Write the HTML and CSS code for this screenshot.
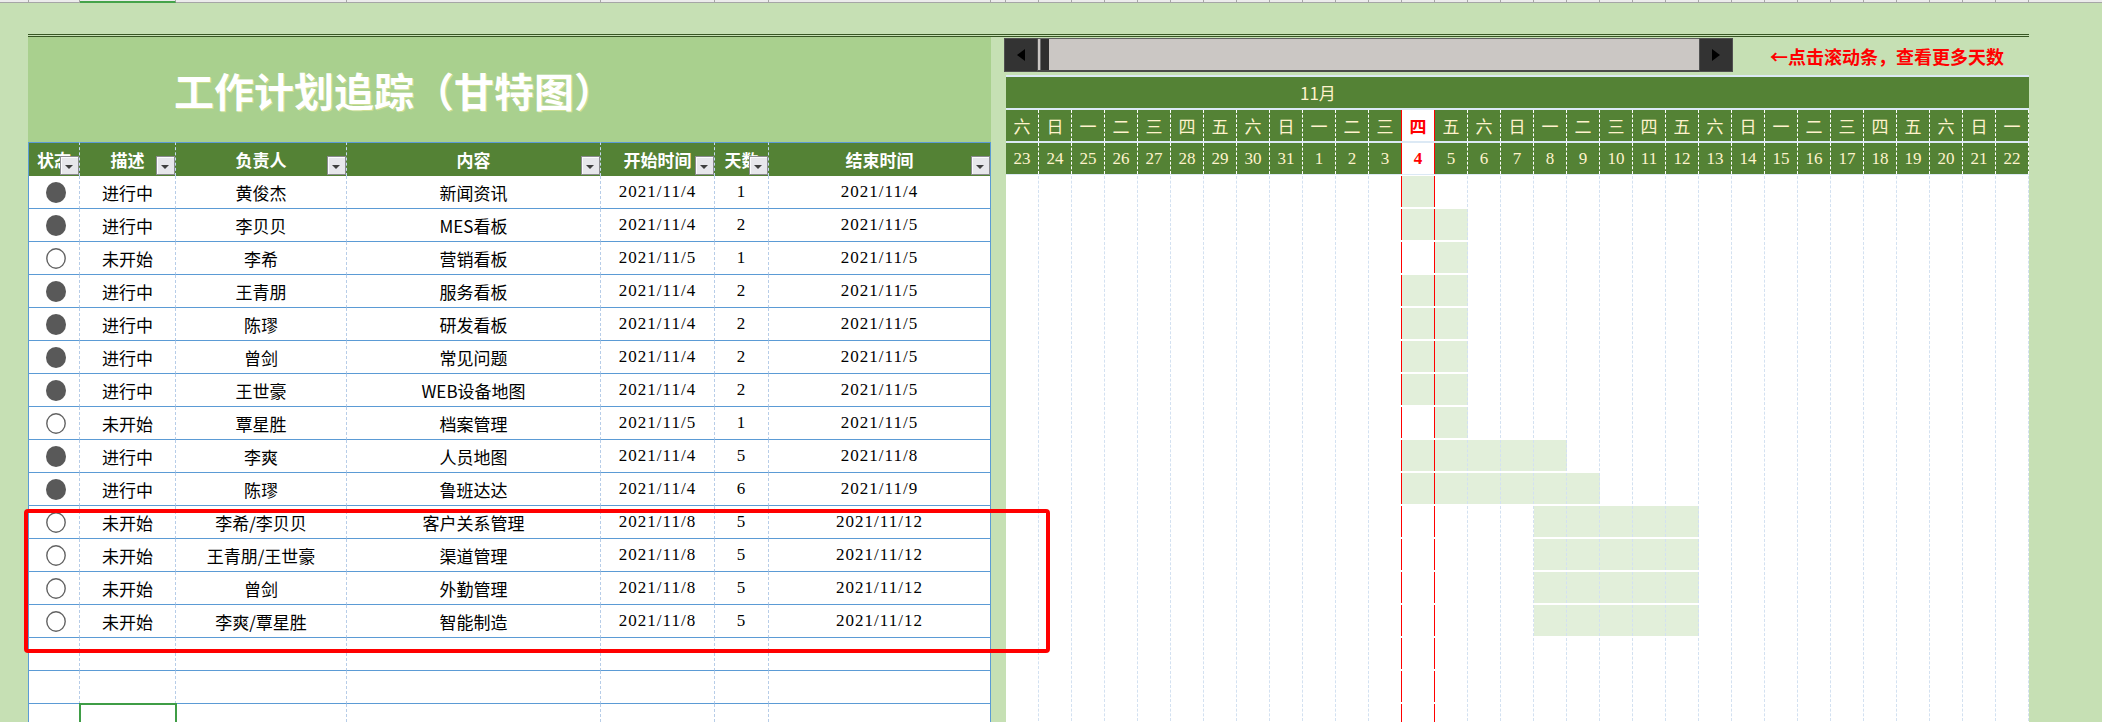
FILE: index.html
```html
<!DOCTYPE html>
<html lang="zh-CN">
<head>
<meta charset="utf-8">
<title>工作计划追踪（甘特图）</title>
<link rel="stylesheet" href="styles.css">
</head>
<body>
<div class="colhdr">
  <span class="c0"></span><span class="c1"></span><span class="c2"></span><span class="c3"></span><span class="c4"></span><span class="c5"></span><span class="c6"></span><span class="c7"></span><span class="cg"></span>
  <span class="cd"></span><span class="cd"></span><span class="cd"></span><span class="cd"></span><span class="cd"></span><span class="cd"></span><span class="cd"></span><span class="cd"></span><span class="cd"></span><span class="cd"></span><span class="cd"></span><span class="cd"></span><span class="cd"></span><span class="cd"></span><span class="cd"></span><span class="cd"></span><span class="cd"></span><span class="cd"></span><span class="cd"></span><span class="cd"></span><span class="cd"></span><span class="cd"></span><span class="cd"></span><span class="cd"></span><span class="cd"></span><span class="cd"></span><span class="cd"></span><span class="cd"></span><span class="cd"></span><span class="cd"></span><span class="cd"></span>
  <span class="cr"></span>
</div>
<div class="dline"></div>
<div class="main">
  <section class="left">
    <div class="title">工作计划追踪（甘特图）</div>
    <div class="trow thead">
      <div>状态<b class="fb"></b></div>
      <div>描述<b class="fb"></b></div>
      <div>负责人<b class="fb"></b></div>
      <div>内容<b class="fb"></b></div>
      <div>开始时间<b class="fb"></b></div>
      <div>天数<b class="fb"></b></div>
      <div>结束时间<b class="fb"></b></div>
    </div>
    <div class="trow"><div><svg class="dot" viewBox="0 0 20 21"><ellipse cx="10" cy="10.5" rx="10" ry="10.5"/></svg></div><div>进行中</div><div>黄俊杰</div><div>新闻资讯</div><div class="n">2021/11/4</div><div class="n">1</div><div class="n">2021/11/4</div></div>
    <div class="trow"><div><svg class="dot" viewBox="0 0 20 21"><ellipse cx="10" cy="10.5" rx="10" ry="10.5"/></svg></div><div>进行中</div><div>李贝贝</div><div>MES看板</div><div class="n">2021/11/4</div><div class="n">2</div><div class="n">2021/11/5</div></div>
    <div class="trow"><div><svg class="ring" viewBox="0 0 20 21"><ellipse cx="10" cy="10.5" rx="9.2" ry="9.7"/></svg></div><div>未开始</div><div>李希</div><div>营销看板</div><div class="n">2021/11/5</div><div class="n">1</div><div class="n">2021/11/5</div></div>
    <div class="trow"><div><svg class="dot" viewBox="0 0 20 21"><ellipse cx="10" cy="10.5" rx="10" ry="10.5"/></svg></div><div>进行中</div><div>王青朋</div><div>服务看板</div><div class="n">2021/11/4</div><div class="n">2</div><div class="n">2021/11/5</div></div>
    <div class="trow"><div><svg class="dot" viewBox="0 0 20 21"><ellipse cx="10" cy="10.5" rx="10" ry="10.5"/></svg></div><div>进行中</div><div>陈璆</div><div>研发看板</div><div class="n">2021/11/4</div><div class="n">2</div><div class="n">2021/11/5</div></div>
    <div class="trow"><div><svg class="dot" viewBox="0 0 20 21"><ellipse cx="10" cy="10.5" rx="10" ry="10.5"/></svg></div><div>进行中</div><div>曾剑</div><div>常见问题</div><div class="n">2021/11/4</div><div class="n">2</div><div class="n">2021/11/5</div></div>
    <div class="trow"><div><svg class="dot" viewBox="0 0 20 21"><ellipse cx="10" cy="10.5" rx="10" ry="10.5"/></svg></div><div>进行中</div><div>王世豪</div><div>WEB设备地图</div><div class="n">2021/11/4</div><div class="n">2</div><div class="n">2021/11/5</div></div>
    <div class="trow"><div><svg class="ring" viewBox="0 0 20 21"><ellipse cx="10" cy="10.5" rx="9.2" ry="9.7"/></svg></div><div>未开始</div><div>覃星胜</div><div>档案管理</div><div class="n">2021/11/5</div><div class="n">1</div><div class="n">2021/11/5</div></div>
    <div class="trow"><div><svg class="dot" viewBox="0 0 20 21"><ellipse cx="10" cy="10.5" rx="10" ry="10.5"/></svg></div><div>进行中</div><div>李爽</div><div>人员地图</div><div class="n">2021/11/4</div><div class="n">5</div><div class="n">2021/11/8</div></div>
    <div class="trow"><div><svg class="dot" viewBox="0 0 20 21"><ellipse cx="10" cy="10.5" rx="10" ry="10.5"/></svg></div><div>进行中</div><div>陈璆</div><div>鲁班达达</div><div class="n">2021/11/4</div><div class="n">6</div><div class="n">2021/11/9</div></div>
    <div class="trow"><div><svg class="ring" viewBox="0 0 20 21"><ellipse cx="10" cy="10.5" rx="9.2" ry="9.7"/></svg></div><div>未开始</div><div>李希/李贝贝</div><div>客户关系管理</div><div class="n">2021/11/8</div><div class="n">5</div><div class="n">2021/11/12</div></div>
    <div class="trow"><div><svg class="ring" viewBox="0 0 20 21"><ellipse cx="10" cy="10.5" rx="9.2" ry="9.7"/></svg></div><div>未开始</div><div>王青朋/王世豪</div><div>渠道管理</div><div class="n">2021/11/8</div><div class="n">5</div><div class="n">2021/11/12</div></div>
    <div class="trow"><div><svg class="ring" viewBox="0 0 20 21"><ellipse cx="10" cy="10.5" rx="9.2" ry="9.7"/></svg></div><div>未开始</div><div>曾剑</div><div>外勤管理</div><div class="n">2021/11/8</div><div class="n">5</div><div class="n">2021/11/12</div></div>
    <div class="trow"><div><svg class="ring" viewBox="0 0 20 21"><ellipse cx="10" cy="10.5" rx="9.2" ry="9.7"/></svg></div><div>未开始</div><div>李爽/覃星胜</div><div>智能制造</div><div class="n">2021/11/8</div><div class="n">5</div><div class="n">2021/11/12</div></div>
    <div class="trow"><div></div><div></div><div></div><div></div><div></div><div></div><div></div></div>
    <div class="trow"><div></div><div></div><div></div><div></div><div></div><div></div><div></div></div>
    <div class="trow"><div></div><div class="sel"></div><div></div><div></div><div></div><div></div><div></div></div>
  </section>
  <div class="gut"></div>
  <section class="right">
    <div class="sbar">
      <div class="scroll">
        <div class="sbtn"><svg viewBox="0 0 8 12"><path d="M8 0V12L0 6Z"/></svg></div>
        <div class="strack"><div class="thumb"></div></div>
        <div class="sbtn"><svg viewBox="0 0 8 12"><path d="M0 0V12L8 6Z"/></svg></div>
      </div>
      <div class="hint">←点击滚动条，查看更多天数</div>
    </div>
    <div class="mrow">11月</div>
    <div class="hrow wk">
      <span>六</span><span>日</span><span>一</span><span>二</span><span>三</span><span>四</span><span>五</span><span>六</span><span>日</span><span>一</span><span>二</span><span class="r">三</span><span class="r t">四</span><span>五</span><span>六</span><span>日</span><span>一</span><span>二</span><span>三</span><span>四</span><span>五</span><span>六</span><span>日</span><span>一</span><span>二</span><span>三</span><span>四</span><span>五</span><span>六</span><span>日</span><span>一</span>
    </div>
    <div class="hrow dy">
      <span>23</span><span>24</span><span>25</span><span>26</span><span>27</span><span>28</span><span>29</span><span>30</span><span>31</span><span>1</span><span>2</span><span class="r">3</span><span class="r t">4</span><span>5</span><span>6</span><span>7</span><span>8</span><span>9</span><span>10</span><span>11</span><span>12</span><span>13</span><span>14</span><span>15</span><span>16</span><span>17</span><span>18</span><span>19</span><span>20</span><span>21</span><span>22</span>
    </div>
    <div class="gbody">
      <div class="grow"><i></i><i></i><i></i><i></i><i></i><i></i><i></i><i></i><i></i><i></i><i></i><i class="r"></i><i class="r f"></i><i></i><i></i><i></i><i></i><i></i><i></i><i></i><i></i><i></i><i></i><i></i><i></i><i></i><i></i><i></i><i></i><i></i><i></i></div>
      <div class="grow"><i></i><i></i><i></i><i></i><i></i><i></i><i></i><i></i><i></i><i></i><i></i><i class="r"></i><i class="r f"></i><i class="f"></i><i></i><i></i><i></i><i></i><i></i><i></i><i></i><i></i><i></i><i></i><i></i><i></i><i></i><i></i><i></i><i></i><i></i></div>
      <div class="grow"><i></i><i></i><i></i><i></i><i></i><i></i><i></i><i></i><i></i><i></i><i></i><i class="r"></i><i class="r"></i><i class="f"></i><i></i><i></i><i></i><i></i><i></i><i></i><i></i><i></i><i></i><i></i><i></i><i></i><i></i><i></i><i></i><i></i><i></i></div>
      <div class="grow"><i></i><i></i><i></i><i></i><i></i><i></i><i></i><i></i><i></i><i></i><i></i><i class="r"></i><i class="r f"></i><i class="f"></i><i></i><i></i><i></i><i></i><i></i><i></i><i></i><i></i><i></i><i></i><i></i><i></i><i></i><i></i><i></i><i></i><i></i></div>
      <div class="grow"><i></i><i></i><i></i><i></i><i></i><i></i><i></i><i></i><i></i><i></i><i></i><i class="r"></i><i class="r f"></i><i class="f"></i><i></i><i></i><i></i><i></i><i></i><i></i><i></i><i></i><i></i><i></i><i></i><i></i><i></i><i></i><i></i><i></i><i></i></div>
      <div class="grow"><i></i><i></i><i></i><i></i><i></i><i></i><i></i><i></i><i></i><i></i><i></i><i class="r"></i><i class="r f"></i><i class="f"></i><i></i><i></i><i></i><i></i><i></i><i></i><i></i><i></i><i></i><i></i><i></i><i></i><i></i><i></i><i></i><i></i><i></i></div>
      <div class="grow"><i></i><i></i><i></i><i></i><i></i><i></i><i></i><i></i><i></i><i></i><i></i><i class="r"></i><i class="r f"></i><i class="f"></i><i></i><i></i><i></i><i></i><i></i><i></i><i></i><i></i><i></i><i></i><i></i><i></i><i></i><i></i><i></i><i></i><i></i></div>
      <div class="grow"><i></i><i></i><i></i><i></i><i></i><i></i><i></i><i></i><i></i><i></i><i></i><i class="r"></i><i class="r"></i><i class="f"></i><i></i><i></i><i></i><i></i><i></i><i></i><i></i><i></i><i></i><i></i><i></i><i></i><i></i><i></i><i></i><i></i><i></i></div>
      <div class="grow"><i></i><i></i><i></i><i></i><i></i><i></i><i></i><i></i><i></i><i></i><i></i><i class="r"></i><i class="r f"></i><i class="f"></i><i class="f"></i><i class="f"></i><i class="f"></i><i></i><i></i><i></i><i></i><i></i><i></i><i></i><i></i><i></i><i></i><i></i><i></i><i></i><i></i></div>
      <div class="grow"><i></i><i></i><i></i><i></i><i></i><i></i><i></i><i></i><i></i><i></i><i></i><i class="r"></i><i class="r f"></i><i class="f"></i><i class="f"></i><i class="f"></i><i class="f"></i><i class="f"></i><i></i><i></i><i></i><i></i><i></i><i></i><i></i><i></i><i></i><i></i><i></i><i></i><i></i></div>
      <div class="grow"><i></i><i></i><i></i><i></i><i></i><i></i><i></i><i></i><i></i><i></i><i></i><i class="r"></i><i class="r"></i><i></i><i></i><i></i><i class="f"></i><i class="f"></i><i class="f"></i><i class="f"></i><i class="f"></i><i></i><i></i><i></i><i></i><i></i><i></i><i></i><i></i><i></i><i></i></div>
      <div class="grow"><i></i><i></i><i></i><i></i><i></i><i></i><i></i><i></i><i></i><i></i><i></i><i class="r"></i><i class="r"></i><i></i><i></i><i></i><i class="f"></i><i class="f"></i><i class="f"></i><i class="f"></i><i class="f"></i><i></i><i></i><i></i><i></i><i></i><i></i><i></i><i></i><i></i><i></i></div>
      <div class="grow"><i></i><i></i><i></i><i></i><i></i><i></i><i></i><i></i><i></i><i></i><i></i><i class="r"></i><i class="r"></i><i></i><i></i><i></i><i class="f"></i><i class="f"></i><i class="f"></i><i class="f"></i><i class="f"></i><i></i><i></i><i></i><i></i><i></i><i></i><i></i><i></i><i></i><i></i></div>
      <div class="grow"><i></i><i></i><i></i><i></i><i></i><i></i><i></i><i></i><i></i><i></i><i></i><i class="r"></i><i class="r"></i><i></i><i></i><i></i><i class="f"></i><i class="f"></i><i class="f"></i><i class="f"></i><i class="f"></i><i></i><i></i><i></i><i></i><i></i><i></i><i></i><i></i><i></i><i></i></div>
      <div class="grow"><i></i><i></i><i></i><i></i><i></i><i></i><i></i><i></i><i></i><i></i><i></i><i class="r"></i><i class="r"></i><i></i><i></i><i></i><i></i><i></i><i></i><i></i><i></i><i></i><i></i><i></i><i></i><i></i><i></i><i></i><i></i><i></i><i></i></div>
      <div class="grow"><i></i><i></i><i></i><i></i><i></i><i></i><i></i><i></i><i></i><i></i><i></i><i class="r"></i><i class="r"></i><i></i><i></i><i></i><i></i><i></i><i></i><i></i><i></i><i></i><i></i><i></i><i></i><i></i><i></i><i></i><i></i><i></i><i></i></div>
      <div class="grow"><i></i><i></i><i></i><i></i><i></i><i></i><i></i><i></i><i></i><i></i><i></i><i class="r"></i><i class="r"></i><i></i><i></i><i></i><i></i><i></i><i></i><i></i><i></i><i></i><i></i><i></i><i></i><i></i><i></i><i></i><i></i><i></i><i></i></div>
    </div>
  </section>
</div>
<div class="callout"></div>
</body>
</html>
```

FILE: styles.css
```css
* { box-sizing: border-box; margin: 0; padding: 0; }
html, body { width: 2102px; height: 722px; overflow: hidden; }
body {
  background: #c6e0b4;
  font-family: "Noto Sans CJK SC", "Noto Sans", sans-serif;
  color: #000;
  position: relative;
}

/* spreadsheet column header remnant */
.colhdr { display: flex; height: 3px; }
.colhdr span {
  flex: none; height: 3px; background: #ececec;
  border-right: 1px solid #a6a6a6; border-bottom: 1px solid #a6a6a6;
}
.colhdr .c0 { width: 29px; }
.colhdr .c1 { width: 51px; }
.colhdr .c2 { width: 96px; border-bottom: 2px solid #45a34a; }
.colhdr .c3 { width: 171px; }
.colhdr .c4 { width: 254px; }
.colhdr .c5 { width: 114px; }
.colhdr .c6 { width: 54px; }
.colhdr .c7 { width: 222px; }
.colhdr .cg { width: 15px; }
.colhdr .cd { width: 33px; }
.colhdr .cr { flex: 1; border-right: 0; }

.dline {
  margin: 31px 0 0 28px; width: 2001px; height: 3px;
  border-top: 1px solid #375623; border-bottom: 1px solid #375623;
}

.main { display: flex; align-items: flex-start; margin-left: 28px; }
.left { width: 963px; flex: none; }
.gut { width: 15px; flex: none; }
.right { width: 1023px; flex: none; }

/* title */
.title {
  height: 105px; background: #a9d08e;
  display: flex; align-items: center; padding-left: 146px;
  color: #fff; font-size: 40px; font-weight: 700; line-height: 1;
  text-shadow: 1px 1px 0 rgba(236, 236, 150, 0.55);
}

/* table */
.trow {
  display: grid;
  grid-template-columns: 52px 96px 171px 254px 114px 54px 222px;
  height: 33px; background: #fff;
}
.trow > div {
  border-right: 1px dashed #b7cde8;
  border-bottom: 1px solid #5b9bd5;
  display: flex; align-items: center; justify-content: center;
  font-size: 17px; white-space: nowrap; overflow: hidden;
}
.trow > div:first-child { border-left: 1px solid #5b9bd5; }
.trow > div:last-child { border-right: 1px solid #5b9bd5; }
.trow > div.n { font-family: "Liberation Serif", serif; letter-spacing: 1px; }

.thead { height: 34px; background: #548235; }
.thead > div {
  position: relative; overflow: visible;
  border-top: 1px solid #5b9bd5; border-bottom: 0;
  border-right-color: #c5d9f1;
  color: #fff; font-weight: 700;
}
.thead > div:last-child { border-right: 1px solid #5b9bd5; }

.fb {
  position: absolute; right: 0; bottom: 1px;
  width: 19px; height: 19px;
  background: #e7e7eb; border: 1px solid #8a8a8e;
  box-shadow: inset 1px 1px 0 #fbfbfd;
}
.fb::after {
  content: ""; position: absolute; left: 4px; top: 8px;
  border-left: 4px solid transparent; border-right: 4px solid transparent;
  border-top: 4px solid #3f3f3f;
}

.dot, .ring { width: 20px; height: 21px; margin-left: 3px; }
.dot ellipse { fill: #595959; }
.ring ellipse { fill: #fff; stroke: #626262; stroke-width: 1.4; }

.sel { outline: 2px solid #3f9d46; outline-offset: -1px; }

/* gantt top: scroll bar */
.sbar { height: 38px; display: flex; align-items: center; }
.scroll { display: flex; height: 34px; width: 729px; margin: 0 0 2px -2px; flex: none; }
.sbtn {
  width: 34px; height: 34px; flex: none;
  background: #333; border: 1px solid #505050;
  display: flex; align-items: center; justify-content: center;
}
.sbtn svg { width: 8px; height: 12px; fill: #000; }
.strack {
  flex: 1; display: flex; background: #cbc7c4;
  border-top: 1px solid #616161; border-bottom: 2px solid #4a4a4a;
}
.thumb { width: 9px; margin-left: 2px; background: #2f2f2f; border-left: 1px solid #6c6c6c; }
.hint {
  margin-left: 37px; color: #f00;
  font-size: 18px; font-weight: 700; line-height: 20px; white-space: nowrap;
}

/* gantt header */
.mrow {
  height: 33px; border-top: 2px solid #dce9f5; background: #548235;
  display: flex; align-items: center; padding-left: 294px;
  color: #fff2cc; font-size: 17px;
}
.hrow { display: flex; height: 33px; border-top: 2px solid #dce9f5; background: #548235; }
.hrow.dy { height: 34px; border-bottom: 1px solid #dce9f5; }
.hrow span {
  flex: none; width: 33px;
  border-right: 1px dashed #ffffff;
  display: flex; align-items: center; justify-content: center;
  color: #fff2cc; font-size: 17px;
}
.hrow.dy span { font-family: "Liberation Serif", serif; }
.hrow span.r { border-right: 1px solid #f00; }
.hrow span.t { background: #fff; color: #f00; font-weight: 700; }

/* gantt body */
.grow { display: flex; height: 33px; padding: 1px 0; background: #fff; }
.grow i { flex: none; width: 33px; height: 31px; border-right: 1px dashed #d3e1f1; }
.grow i.r { border-right: 1px solid #f00; }
.grow i.f { background: #e2efda; }

/* annotation */
.callout {
  position: absolute; left: 24px; top: 509px;
  width: 1026px; height: 144px;
  border: 4px solid #f00; border-radius: 4px;
}
```
